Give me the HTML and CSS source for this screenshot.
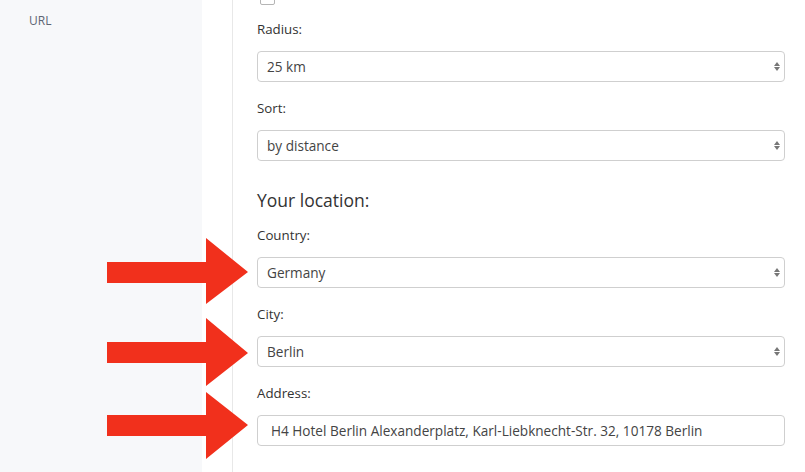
FILE: index.html
```html
<!DOCTYPE html>
<html>
<head>
<meta charset="utf-8">
<link rel="stylesheet" href="styles.css">
</head>
<body>
<div class="page">
  <aside class="sidebar">
    <div class="side-item">URL</div>
  </aside>
  <div class="spacer"></div>
  <main class="main">
    <div class="checkbox"></div>
    <div class="field">
      <label class="label">Radius:</label>
      <div class="select"><span>25 km</span><span class="caret"><i class="up"></i><i class="down"></i></span></div>
    </div>
    <div class="field">
      <label class="label">Sort:</label>
      <div class="select"><span>by distance</span><span class="caret"><i class="up"></i><i class="down"></i></span></div>
    </div>
    <h3 class="section">Your location:</h3>
    <div class="field">
      <label class="label">Country:</label>
      <div class="select"><span>Germany</span><span class="caret"><i class="up"></i><i class="down"></i></span></div>
    </div>
    <div class="field">
      <label class="label">City:</label>
      <div class="select"><span>Berlin</span><span class="caret"><i class="up"></i><i class="down"></i></span></div>
    </div>
    <div class="field">
      <label class="label">Address:</label>
      <div class="input">H4 Hotel Berlin Alexanderplatz, Karl-Liebknecht-Str. 32, 10178 Berlin</div>
    </div>
  </main>
</div>
<svg class="arrows" width="805" height="472" viewBox="0 0 805 472">
  <polygon points="107,262 206,262 206,238 248,272 206,304 206,283 107,283"/>
  <polygon points="107,342 206,342 206,318 248,353 206,386 206,363 107,363"/>
  <polygon points="107,415 206,415 206,392 248,425 206,459 206,436 107,436"/>
</svg>
</body>
</html>
```
FILE: styles.css
```css
html, body {
  margin: 0;
  padding: 0;
  background: #fff;
}
body {
  font-family: "Open Sans", "Noto Sans", "DejaVu Sans", sans-serif;
  color: #333;
  width: 805px;
  height: 472px;
  overflow: hidden;
  position: relative;
}
.page {
  display: flex;
  height: 472px;
}
.sidebar {
  width: 202px;
  background: #f7f8fa;
  flex: none;
}
.side-item {
  padding: 12px 0 0 29px;
  font-size: 12px;
  line-height: 18px;
  color: #5d6573;
}
.spacer {
  width: 30px;
  flex: none;
}
.main {
  border-left: 1px solid #e8e8e8;
  padding: 0 19px 0 24px;
  width: 528px;
  flex: none;
}
.checkbox {
  width: 13px;
  height: 13px;
  margin: -10px 0 14px 3px;
  border: 1px solid #b5b5b5;
  border-radius: 2px;
}
.field {
  display: flex;
  flex-direction: column;
}
.label {
  font-size: 13.3px;
  line-height: 20px;
  color: #333;
  margin: 0 0 12px;
}
.select, .input {
  box-sizing: border-box;
  height: 31px;
  border: 1px solid #cfcfcf;
  border-radius: 4px;
  display: flex;
  align-items: center;
  font-size: 13.6px;
  color: #444;
  margin-bottom: 16px;
}
.select {
  padding: 0 0 0 9px;
  justify-content: space-between;
}
.input {
  padding-left: 13px;
}
.caret {
  display: flex;
  flex-direction: column;
  gap: 1px;
  margin-right: 4px;
}
.caret i {
  display: block;
  width: 0;
  height: 0;
  border-left: 3px solid transparent;
  border-right: 3px solid transparent;
}
.caret .up { border-bottom: 4px solid #777; }
.caret .down { border-top: 4px solid #777; }
.section {
  font-size: 17.5px;
  font-weight: normal;
  line-height: 24px;
  margin: 11px 0 13px;
  color: #333;
}
.arrows {
  position: absolute;
  left: 0;
  top: 0;
  pointer-events: none;
}
.arrows polygon {
  fill: #f1301c;
}
```
